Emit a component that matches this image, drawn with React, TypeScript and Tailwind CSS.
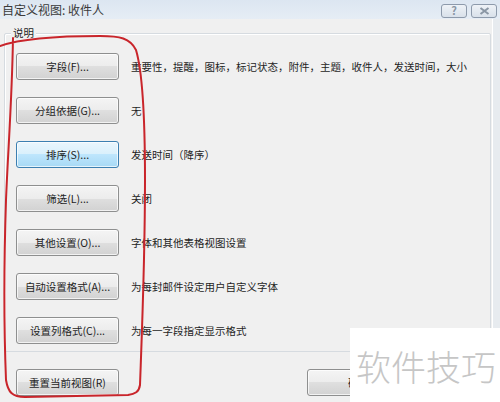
import React from "react";

const rows: { label: string; desc: string; active?: boolean }[] = [
  { label: "字段(F)...", desc: "重要性，提醒，图标，标记状态，附件，主题，收件人，发送时间，大小" },
  { label: "分组依据(G)...", desc: "无" },
  { label: "排序(S)...", desc: "发送时间（降序）", active: true },
  { label: "筛选(L)...", desc: "关闭" },
  { label: "其他设置(O)...", desc: "字体和其他表格视图设置" },
  { label: "自动设置格式(A)...", desc: "为每封邮件设定用户自定义字体" },
  { label: "设置列格式(C)...", desc: "为每一字段指定显示格式" },
];

function WinButton({ label, active, className = "" }: { label: string; active?: boolean; className?: string }) {
  const skin = active
    ? "border-[#3c7fb1] bg-[linear-gradient(to_bottom,#eaf6fd_0%,#d9f0fc_50%,#bee6fd_50%,#a7d9f5_100%)]"
    : "border-[#8e8f8f] bg-[linear-gradient(to_bottom,#f4f4f4_0%,#ececec_50%,#dfdfdf_50%,#d2d2d2_100%)]";
  return (
    <div
      className={`h-[27px] w-[103px] shrink-0 rounded-[3px] border ${skin} shadow-[inset_0_0_0_1px_rgba(255,255,255,0.7)] flex items-center justify-center text-[10.5px] text-[#1e1e1e] ${className}`}
    >
      {label}
    </div>
  );
}

export default function App() {
  return (
    <div
      className="relative w-[500px] h-[402px] overflow-hidden bg-[#f0f0f0] text-[#1e1e1e]"
      style={{ fontFamily: '"Noto Sans CJK SC", "Noto Sans", sans-serif' }}
    >
      {/* title bar */}
      <div className="h-[19px] flex items-center justify-between bg-[linear-gradient(to_bottom,#dce6f1,#e6edf5)]">
        <span className="ml-[2px] text-[12px] leading-none text-[#3a3a3a]">自定义视图: 收件人</span>
        <div className="flex items-center gap-[4px] mr-[3px] mt-[2px]">
          <div className="w-[26px] h-[14px] rounded-[3px] border border-[#8d9aab] bg-[linear-gradient(to_bottom,#eef2f7,#d9e1ea)] flex items-center justify-center text-[11px] leading-none font-bold text-[#8a96a4]">
            ?
          </div>
          <div className="w-[26px] h-[14px] rounded-[3px] border border-[#8d9aab] bg-[linear-gradient(to_bottom,#eef2f7,#d9e1ea)] flex items-center justify-center">
            <svg width="11" height="8" viewBox="0 0 11 8">
              <path d="M1.5 1 L9.5 7 M9.5 1 L1.5 7" stroke="#8a96a4" strokeWidth="2" />
            </svg>
          </div>
        </div>
      </div>

      {/* body */}
      <div className="flex">
        <div className="flex-1 pl-[4px]">
          {/* group box */}
          <div className="relative mt-[14px] w-[487px] rounded-[2px] border border-[#d6dbe0] shadow-[inset_1px_1px_0_#ffffff] pt-[19px] pl-[11px] pb-[7px]">
            <span className="absolute left-[6px] top-[-8px] bg-[#f0f0f0] px-[2px] text-[10.5px] leading-[14px]">说明</span>
            <div className="flex flex-col gap-[17px]">
              {rows.map((r) => (
                <div key={r.label} className="flex items-center gap-[12px]">
                  <WinButton label={r.label} active={r.active} />
                  <span className="text-[10.5px] whitespace-nowrap">{r.desc}</span>
                </div>
              ))}
            </div>
          </div>

          {/* bottom buttons */}
          <div className="flex items-center mt-[17px] pl-[12px]">
            <WinButton label="重置当前视图(R)" />
            <WinButton label="确定" className="ml-[188px] w-[100px]" />
          </div>
        </div>
        <div className="w-[8px] h-[383px] border-l border-[#ffffff] bg-[#e7ebef]" />
      </div>

      {/* hand-drawn marker loop */}
      <svg className="absolute inset-0 pointer-events-none" width="500" height="402" viewBox="0 0 500 402">
        <path
          d="M0,46 C20,39 60,36 100,36 C120,36 130,38 136,50 C142,70 145,110 145,180 C145,260 142,330 140,385 C139,392 135,394 128,395 L25,397 C12,397 8,392 6,380 C4,330 4,260 6,200 C8,150 12,100 13,38"
          fill="none"
          stroke="#c9252b"
          strokeWidth="2"
          strokeLinecap="round"
        />
      </svg>

      {/* watermark */}
      <div className="absolute left-[350px] top-[328px] w-[150px] h-[74px] bg-white flex items-center pl-[6px]">
        <span className="text-[35px] leading-none font-light text-[#c6c6c6] tracking-[0px]">软件技巧</span>
      </div>
    </div>
  );
}
